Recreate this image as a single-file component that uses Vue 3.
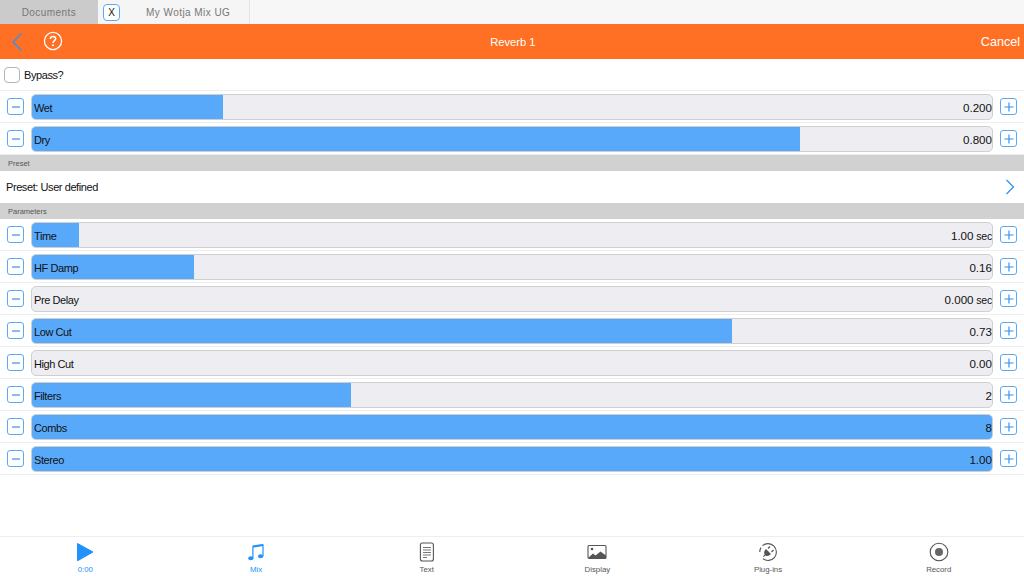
<script setup>
const topRows = [
  { label: 'Wet', value: '0.200', unit: '', pct: 19.85 },
  { label: 'Dry', value: '0.800', unit: '', pct: 80 },
]
const params = [
  { label: 'Time', value: '1.00', unit: ' sec', pct: 4.9 },
  { label: 'HF Damp', value: '0.16', unit: '', pct: 16.9 },
  { label: 'Pre Delay', value: '0.000', unit: ' sec', pct: 0 },
  { label: 'Low Cut', value: '0.73', unit: '', pct: 72.9 },
  { label: 'High Cut', value: '0.00', unit: '', pct: 0 },
  { label: 'Filters', value: '2', unit: '', pct: 33.2 },
  { label: 'Combs', value: '8', unit: '', pct: 100 },
  { label: 'Stereo', value: '1.00', unit: '', pct: 100 },
]
</script>

<template>
  <div class="page">
    <div class="tabs">
      <div class="tab docs">Documents</div>
      <div class="tab doc">
        <span class="close">X</span>
        <span class="doc-name">My Wotja Mix UG</span>
      </div>
    </div>
    <header class="head">
      <div class="head-left">
        <svg width="14" height="20" viewBox="0 0 14 20"><path d="M11.5 1.5 L3 10 L11.5 18.5" fill="none" stroke="#2f93f5" stroke-width="1.4"/></svg>
        <svg class="help" width="20" height="20" viewBox="0 0 20 20">
          <circle cx="10" cy="10" r="8.6" fill="none" stroke="#fff" stroke-width="1.3"/>
          <path d="M7.3 8 C7.3 6.3 8.5 5.4 10 5.4 C11.6 5.4 12.7 6.4 12.7 7.8 C12.7 9.6 10 9.8 10 12" fill="none" stroke="#fff" stroke-width="1.5"/>
          <circle cx="10" cy="14.3" r="1" fill="#fff"/>
        </svg>
      </div>
      <div class="title">Reverb 1</div>
      <div class="cancel">Cancel</div>
    </header>
    <div class="bypass">
      <span class="check"></span>
      <span class="txt">Bypass?</span>
    </div>
    <div v-for="r in topRows" :key="r.label" class="row">
      <button class="step"><svg width="12" height="12" viewBox="0 0 12 12"><path d="M2 6H10" stroke="#2f93f5" stroke-width="1.2"/></svg></button>
      <div class="track">
        <div class="fill" :style="{ width: r.pct + '%' }"></div>
        <span class="lbl">{{ r.label }}</span>
        <span class="val">{{ r.value }}<small class="unit">{{ r.unit }}</small></span>
      </div>
      <button class="step"><svg width="12" height="12" viewBox="0 0 12 12"><path d="M1.5 6H10.5M6 1.5V10.5" stroke="#2f93f5" stroke-width="1.2"/></svg></button>
    </div>
    <div class="section">Preset</div>
    <div class="preset">
      <span class="txt">Preset: User defined</span>
      <svg width="10" height="16" viewBox="0 0 10 16"><path d="M1.5 1 L8.5 8 L1.5 15" fill="none" stroke="#2f93f5" stroke-width="1.3"/></svg>
    </div>
    <div class="section">Parameters</div>
    <div v-for="r in params" :key="r.label" class="row">
      <button class="step"><svg width="12" height="12" viewBox="0 0 12 12"><path d="M2 6H10" stroke="#2f93f5" stroke-width="1.2"/></svg></button>
      <div class="track">
        <div class="fill" :style="{ width: r.pct + '%' }"></div>
        <span class="lbl">{{ r.label }}</span>
        <span class="val">{{ r.value }}<small class="unit">{{ r.unit }}</small></span>
      </div>
      <button class="step"><svg width="12" height="12" viewBox="0 0 12 12"><path d="M1.5 6H10.5M6 1.5V10.5" stroke="#2f93f5" stroke-width="1.2"/></svg></button>
    </div>
    <nav class="bar">
      <div class="item active">
        <svg width="20" height="20" viewBox="0 0 20 20"><path d="M2.5 1.5 L18 10 L2.5 18.8 Z" fill="#2391fb" stroke="#2391fb" stroke-linejoin="round"/></svg>
        <span>0:00</span>
      </div>
      <div class="item active">
        <svg width="20" height="20" viewBox="0 0 20 20">
          <ellipse cx="4.8" cy="16.2" rx="2.6" ry="2" fill="#2391fb"/>
          <ellipse cx="14.6" cy="14.2" rx="2.6" ry="2" fill="#2391fb"/>
          <path d="M6.9 16 V4.5 L17 3 V14" fill="none" stroke="#2391fb" stroke-width="1.2"/>
          <path d="M6.9 4.5 L17 3" stroke="#2391fb" stroke-width="2.2"/>
        </svg>
        <span>Mix</span>
      </div>
      <div class="item">
        <svg width="20" height="20" viewBox="0 0 20 20">
          <rect x="3.4" y="1" width="13" height="18" rx="2" fill="none" stroke="#555" stroke-width="1.1"/>
          <path d="M6 5.5H14M6 8H14M6 10.5H14M6 13H14M6 15.5H10" stroke="#777" stroke-width="1"/>
        </svg>
        <span>Text</span>
      </div>
      <div class="item">
        <svg width="20" height="20" viewBox="0 0 20 20">
          <rect x="1" y="3.5" width="18" height="13" rx="1" fill="none" stroke="#555" stroke-width="1.1"/>
          <circle cx="5" cy="7" r="1.3" fill="#555"/>
          <path d="M1 16 L6 11.5 L8.5 13.5 L13.5 9.5 L19 13.5 V16 Z" fill="#555"/>
        </svg>
        <span>Display</span>
      </div>
      <div class="item">
        <svg width="20" height="20" viewBox="0 0 20 20">
          <path d="M4.5 3.7 A8.4 8.4 0 1 1 5 16.8" fill="none" stroke="#555" stroke-width="1.1"/>
          <path d="M1.8 10 A8.4 8.4 0 0 1 3 5.6" fill="none" stroke="#555" stroke-width="1.1"/>
          <path d="M8 7 L13 12 Q10 15 7.6 13.4 L5.5 15 L5 14.5 L6.6 12.4 Q5.2 9.6 8 7Z" fill="#555"/>
          <path d="M10 6.5L12 4.5M13.5 10L15.5 8" stroke="#555" stroke-width="1.2"/>
        </svg>
        <span>Plug-ins</span>
      </div>
      <div class="item">
        <svg width="20" height="20" viewBox="0 0 20 20">
          <circle cx="10" cy="10" r="8.8" fill="none" stroke="#555" stroke-width="1.1"/>
          <circle cx="10" cy="10" r="4" fill="#666"/>
        </svg>
        <span>Record</span>
      </div>
    </nav>
  </div>
</template>

<style scoped>
.page {
  width: 1024px;
  height: 576px;
  display: flex;
  flex-direction: column;
  background: #fff;
  font-family: "Liberation Sans", Arial, sans-serif;
  font-size: 11px;
  letter-spacing: -0.42px;
  color: #111;
  overflow: hidden;
}
.tabs {
  height: 24px;
  flex: none;
  display: flex;
  background: #f7f7f7;
}
.tab {
  display: flex;
  align-items: center;
  color: #777;
  font-size: 10px;
  letter-spacing: 0.45px;
}
.docs {
  width: 98px;
  justify-content: center;
  background: #cbcbcb;
}
.doc {
  width: 151px;
  margin-left: 1px;
  padding-left: 4px;
  box-sizing: border-box;
  background: #f5f5f5;
  border-right: 1px solid #e4e4e4;
}
.close {
  width: 17px;
  height: 17px;
  box-sizing: border-box;
  border: 1px solid #5aa9f8;
  border-radius: 4px;
  background: #fff;
  color: #111;
  display: flex;
  align-items: center;
  justify-content: center;
  font-size: 10px;
  letter-spacing: 0;
}
.doc-name {
  margin-left: 26px;
}
.head {
  height: 35px;
  flex: none;
  background: #ff6f24;
  display: flex;
  align-items: center;
  justify-content: space-between;
  color: #fff;
  letter-spacing: 0;
}
.head-left {
  display: flex;
  align-items: center;
  gap: 19px;
  padding-left: 10px;
}
.help {
  margin-top: -2px;
}
.title {
  font-size: 11.2px;
  flex: 1;
  text-align: center;
  padding-right: 18px;
}
.cancel {
  font-size: 12.6px;
  padding: 1px 4px 0 0;
}
.bypass {
  height: 32px;
  flex: none;
  box-sizing: border-box;
  border-bottom: 1px solid #eee;
  display: flex;
  align-items: center;
  gap: 4px;
  padding: 1px 0 0 4px;
}
.txt {
  position: relative;
  top: 0;
}
.check {
  width: 16px;
  height: 16px;
  box-sizing: border-box;
  border: 1px solid #b5b5b5;
  border-radius: 4px;
}
.row {
  height: 32px;
  flex: none;
  box-sizing: border-box;
  border-bottom: 1px solid #eee;
  display: flex;
  align-items: center;
  gap: 7px;
  padding: 0 7px;
}
.step {
  width: 17px;
  height: 17px;
  flex: none;
  box-sizing: border-box;
  padding: 0;
  border: 1px solid #5aa9f8;
  border-radius: 3px;
  background: #fff;
  display: flex;
  align-items: center;
  justify-content: center;
}
.track {
  flex: 1;
  height: 26px;
  box-sizing: border-box;
  border: 1px solid #cfcfd2;
  border-radius: 5px;
  background: #eeeef2;
  position: relative;
  display: flex;
  align-items: center;
  justify-content: space-between;
  padding: 2px 0 0 2px;
  overflow: hidden;
}
.fill {
  position: absolute;
  left: 0;
  top: 0;
  bottom: 0;
  background: #59a9fb;
}
.lbl, .val {
  position: relative;
}
.val {
  font-size: 11.6px;
  letter-spacing: 0;
}
.unit {
  font-size: 10.5px;
  letter-spacing: -0.2px;
}
.section {
  height: 16px;
  flex: none;
  background: #d1d1d1;
  color: #555;
  font-size: 7.5px;
  line-height: 17px;
  padding-left: 8px;
  letter-spacing: 0;
}
.preset {
  height: 32px;
  flex: none;
  display: flex;
  align-items: center;
  justify-content: space-between;
  padding: 0 9px 0 6px;
}
.bar {
  margin-top: auto;
  height: 39px;
  flex: none;
  border-top: 1px solid #eee;
  display: flex;
  color: #555;
  letter-spacing: 0;
}
.item {
  flex: 1;
  display: flex;
  flex-direction: column;
  align-items: center;
  padding-top: 5px;
  font-size: 7.8px;
  line-height: 10px;
  gap: 3px;
}
.item.active {
  color: #2391fb;
}
</style>
